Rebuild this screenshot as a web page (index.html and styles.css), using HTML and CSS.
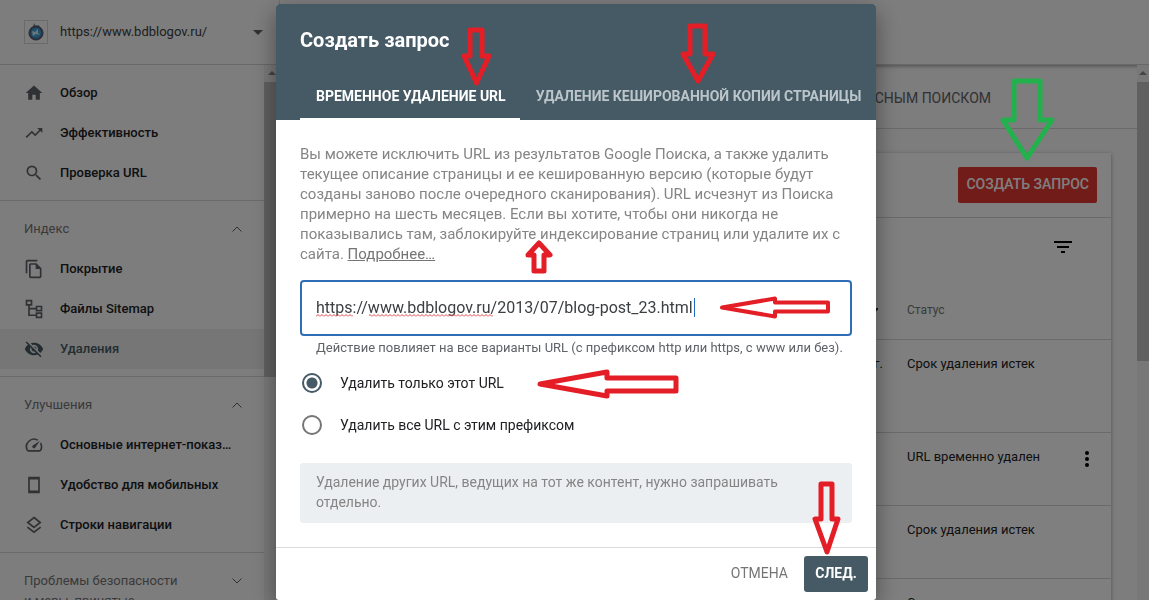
FILE: index.html
```html
<!DOCTYPE html>
<html lang="ru">
<head>
    <meta charset="UTF-8">
    <meta name="viewport" content="width=device-width, initial-scale=1.0">
    <title>Удаления</title>
    <link rel="stylesheet" href="styles.css">
</head>
<body>
    <div class="page">
        <!-- Top bar -->
        <header class="topbar">
            <button class="site-select">
                <span class="favicon">
                    <svg width="16" height="18" viewBox="0 0 16 18">
                        <path d="M5 4 6 0l2 3 3-1 1 4z" fill="#8a8f98"/>
                        <circle cx="8" cy="10" r="7" fill="#4f6b92" stroke="#4a4f5c"/>
                        <circle cx="8" cy="10" r="5" fill="#3fa3d8"/>
                        <path d="m4 8 3 1 3-3v4l2 2-4-1-3 2z" fill="#d5edf5"/>
                    </svg>
                </span>
                <span class="site-url">https://www.bdblogov.ru/</span>
                <svg width="10" height="5" viewBox="0 0 10 5"><path d="M0 0h10L5 5z" fill="#5f6368"/></svg>
            </button>
        </header>

        <div class="columns">
            <!-- Sidebar -->
            <nav class="sidebar">
                <div class="nav-list">
                    <div class="nav-section">
                        <a class="nav-item" href="#">
                            <svg class="icon" viewBox="0 0 24 24"><path d="M10 20v-6h4v6h5v-8h3L12 3 2 12h3v8z"/></svg>
                            <span>Обзор</span>
                        </a>
                        <a class="nav-item" href="#">
                            <svg class="icon" viewBox="0 0 24 24"><path d="m16 6 2.29 2.29-4.88 4.88-4-4L2 16.59 3.41 18l6-6 4 4 6.3-6.29L22 12V6z"/></svg>
                            <span>Эффективность</span>
                        </a>
                        <a class="nav-item" href="#">
                            <svg class="icon" viewBox="0 0 24 24"><path d="M15.5 14h-.79l-.28-.27A6.47 6.47 0 0 0 16 9.5 6.5 6.5 0 1 0 9.5 16c1.61 0 3.09-.59 4.23-1.57l.27.28v.79l5 4.99L20.49 19l-4.99-5zm-6 0C7.01 14 5 11.99 5 9.5S7.01 5 9.5 5 14 7.01 14 9.5 11.99 14 9.5 14z"/></svg>
                            <span>Проверка URL</span>
                        </a>
                    </div>
                    <div class="nav-section">
                        <button class="nav-title">
                            <span>Индекс</span>
                            <svg class="chevron" viewBox="0 0 10 6"><path d="m0.500 5.500 4.500-4.500 4.500 4.500"/></svg>
                        </button>
                        <a class="nav-item" href="#">
                            <svg class="icon" viewBox="0 0 24 24"><path d="M16 1H4a2 2 0 0 0-2 2v14h2V3h12zm-1 4H8a2 2 0 0 0-2 2v14a2 2 0 0 0 2 2h11a2 2 0 0 0 2-2V11zM8 21V7h6v5h5v9z"/></svg>
                            <span>Покрытие</span>
                        </a>
                        <a class="nav-item" href="#">
                            <svg class="icon line" viewBox="0 0 24 24"><path d="M3 2h6v5H3zM15 9h6v5h-6zM15 17h6v5h-6zM6 7v12.500h9M6 11.500h9"/></svg>
                            <span>Файлы Sitemap</span>
                        </a>
                        <a class="nav-item active" href="#">
                            <svg class="icon" viewBox="0 0 24 24"><path d="M12 7a5 5 0 0 1 4.640 6.830l2.920 2.920A11.820 11.820 0 0 0 23 12c-1.730-4.390-6-7.500-11-7.500-1.400 0-2.740.250-3.980.700l2.160 2.160C10.740 7.130 11.350 7 12 7zM2 4.270l2.740 2.740A11.800 11.800 0 0 0 1 12c1.730 4.390 6 7.500 11 7.500 1.550 0 3.030-.300 4.380-.840L19.730 22 21 20.730 3.270 3zM7.530 9.800l1.550 1.550A3 3 0 0 0 12.650 14.920l1.550 1.550A5 5 0 0 1 7.530 9.800zm4.310-.780 3.150 3.150.020-.160a3 3 0 0 0-3-3z"/></svg>
                            <span>Удаления</span>
                        </a>
                    </div>
                    <div class="nav-section">
                        <button class="nav-title">
                            <span>Улучшения</span>
                            <svg class="chevron" viewBox="0 0 10 6"><path d="m0.500 5.500 4.500-4.500 4.500 4.500"/></svg>
                        </button>
                        <a class="nav-item" href="#">
                            <svg class="icon" viewBox="0 0 24 24"><path d="m20.380 8.570-1.230 1.850a8 8 0 0 1-.220 7.580H5.070A8 8 0 0 1 15.580 6.850l1.850-1.230A10 10 0 0 0 3.350 19a2 2 0 0 0 1.720 1h13.850a2 2 0 0 0 1.740-1 10 10 0 0 0-.270-10.440zM10.590 15.410a2 2 0 0 0 2.830 0l5.660-8.490-8.490 5.660a2 2 0 0 0 0 2.830z"/></svg>
                            <span>Основные интернет-показ…</span>
                        </a>
                        <a class="nav-item" href="#">
                            <svg class="icon line" viewBox="0 0 24 24"><path d="M6 3h12v18H6zM6 4.500h12M6 19.500h12"/></svg>
                            <span>Удобство для мобильных</span>
                        </a>
                        <a class="nav-item" href="#">
                            <svg class="icon line" viewBox="0 0 24 24"><path d="m12 3 7.500 6-7.500 6-7.500-6zM4 14.500l8 6.200 8-6.200"/></svg>
                            <span>Строки навигации</span>
                        </a>
                    </div>
                    <div class="nav-section">
                        <button class="nav-title">
                            <span>Проблемы безопасности и меры, принятые</span>
                            <svg class="chevron" viewBox="0 0 10 6"><path d="m0.500 0.500 4.500 4.500 4.500-4.500"/></svg>
                        </button>
                    </div>
                </div>
                <div class="scrollbar">
                    <svg class="scroll-up" viewBox="0 0 8 4"><path d="M0 4h8L4 0z"/></svg>
                    <div class="thumb nav-thumb"></div>
                </div>
            </nav>

            <!-- Requests -->
            <main class="main">
                <div class="content">
                    <h2 class="content-tab">СНЫМ ПОИСКОМ</h2>
                    <section class="card">
                        <div class="card-head">
                            <button class="create-button">СОЗДАТЬ ЗАПРОС</button>
                        </div>
                        <div class="card-tools">
                            <button class="filter-button" aria-label="Фильтр">
                                <svg width="18" height="12" viewBox="0 0 18 12"><path d="M0 0h18v2H0zM3 5h12v2H3zM7 10h4v2H7z"/></svg>
                            </button>
                        </div>
                        <table class="requests">
                            <thead>
                                <tr>
                                    <th class="date"><svg width="8" height="6" viewBox="0 0 8 6"><path d="m0 1 3 4 5-5" fill="none" stroke="#202124" stroke-width="2"/></svg></th>
                                    <th class="status">Статус</th>
                                    <th class="menu"></th>
                                </tr>
                            </thead>
                            <tbody>
                                <tr class="tall">
                                    <td class="date">г.</td>
                                    <td>Срок удаления истек</td>
                                    <td></td>
                                </tr>
                                <tr>
                                    <td></td>
                                    <td>URL временно удален</td>
                                    <td class="menu">
                                        <button class="more-button" aria-label="Ещё">
                                            <svg width="4" height="16" viewBox="0 0 4 16"><circle cx="2" cy="2" r="2"/><circle cx="2" cy="8" r="2"/><circle cx="2" cy="14" r="2"/></svg>
                                        </button>
                                    </td>
                                </tr>
                                <tr>
                                    <td></td>
                                    <td>Срок удаления истек</td>
                                    <td></td>
                                </tr>
                                <tr>
                                    <td></td>
                                    <td>Срок удаления истек</td>
                                    <td></td>
                                </tr>
                            </tbody>
                        </table>
                    </section>
                </div>
                <div class="scrollbar">
                    <svg class="scroll-up" viewBox="0 0 8 4"><path d="M0 4h8L4 0z"/></svg>
                    <div class="thumb main-thumb"></div>
                </div>
            </main>
        </div>
    </div>

    <!-- Dialog -->
    <div class="overlay">
        <form class="dialog">
            <div class="dialog-header">
                <h1 class="dialog-title">Создать запрос</h1>
                <div class="tabs">
                    <button type="button" class="tab selected">ВРЕМЕННОЕ УДАЛЕНИЕ URL</button>
                    <button type="button" class="tab">УДАЛЕНИЕ КЕШИРОВАННОЙ КОПИИ СТРАНИЦЫ</button>
                </div>
            </div>
            <div class="dialog-body">
                <p class="description">Вы можете исключить URL из результатов Google Поиска, а также удалить<br>
                    текущее описание страницы и ее кешированную версию (которые будут<br>
                    созданы заново после очередного сканирования). URL исчезнут из Поиска<br>
                    примерно на шесть месяцев. Если вы хотите, чтобы они никогда не<br>
                    показывались там, заблокируйте индексирование страниц или удалите их с<br>
                    сайта. <a href="#">Подробнее…</a></p>
                <div class="field">
                    <input type="text" id="url" class="url-input" aria-label="URL" aria-describedby="url-hint" spellcheck="false" value="https://www.bdblogov.ru/2013/07/blog-post_23.html">
                    <!-- spelling marks and text caret -->
                    <svg class="field-marks" viewBox="0 0 400 24" aria-hidden="true">
                        <defs>
                            <pattern id="wave" width="4" height="3" patternUnits="userSpaceOnUse">
                                <path d="m0 2.500 2-2 2 2" fill="none" stroke="#e04545"/>
                            </pattern>
                        </defs>
                        <rect x="0" y="18" width="37" height="3" fill="url(#wave)"/>
                        <rect x="53" y="18" width="124" height="3" fill="url(#wave)"/>
                        <path d="M378.500 2v19" stroke="#1f6cc0"/>
                    </svg>
                </div>
                <div class="hint" id="url-hint">Действие повлияет на все варианты URL (с префиксом http или https, с www или без).</div>
                <label class="option"><input type="radio" name="scope" checked> Удалить только этот URL</label>
                <label class="option"><input type="radio" name="scope"> Удалить все URL с этим префиксом</label>
                <div class="notice">Удаление других URL, ведущих на тот же контент, нужно запрашивать отдельно.</div>
            </div>
            <div class="dialog-footer">
                <button type="button" class="cancel-button">ОТМЕНА</button>
                <button type="button" class="next-button">СЛЕД.</button>
            </div>
            <!-- Red pointers -->
            <svg class="pointers" aria-hidden="true">
                <path d="M194 26h12v26h7l-12.500 27L188 52h6z"/>
                <path d="M414 22h15v28h8l-15 27-15-27h7z"/>
                <path d="m263 239 11 12h-6v16h-10v-16h-6z"/>
                <path class="thin" d="m446 303.500 53-9v4h53v9h-53v5z"/>
                <path d="m264 380 67-12v6h69v13h-69v5z"/>
                <path d="M545 480h11v35h6l-11 33-12-33h6z"/>
            </svg>
        </form>
    </div>
    <svg class="green-pointer" viewBox="0 0 56 86" aria-hidden="true">
        <path d="M14 5h26v39h12L27 82 3 44h11z"/>
    </svg>
</body>
</html>
```
FILE: styles.css
```css
* {
    margin: 0;
    padding: 0;
    box-sizing: border-box;
}

body {
    font-family: Roboto, "Liberation Sans", sans-serif;
    font-size: 14px;
    line-height: 20px;
    color: #202124;
    background-color: #fafafa;
    height: 100vh;
    overflow: hidden;
}

button {
    font: inherit;
    color: inherit;
    background: none;
    border: none;
    cursor: pointer;
}

.page {
    height: 100vh;
    display: flex;
    flex-direction: column;
    overflow: hidden;
}

/* Top bar */
.topbar {
    height: 65px;
    flex: none;
    display: flex;
    background-color: #fafafa;
    border-bottom: 1px solid #d0d0d0;
    box-shadow: 0 1px 4px rgba(0, 0, 0, 0.4);
}

.site-select {
    width: 280px;
    padding: 0 16px 0 24px;
    display: flex;
    align-items: center;
    border-right: 1px solid #dadce0;
    text-align: left;
    font-size: 13px;
}

.favicon {
    width: 24px;
    height: 24px;
    margin-right: 12px;
    display: flex;
    align-items: center;
    justify-content: center;
    border: 1px solid #d5d5d5;
}

.site-url {
    flex: 1;
    color: #3c4043;
}

.columns {
    flex: 1;
    min-height: 0;
    display: flex;
    overflow: hidden;
}

/* Sidebar */
.sidebar {
    width: 280px;
    flex: none;
    display: flex;
    overflow: hidden;
    background-color: #fafafa;
    z-index: 1;
}

.nav-list {
    flex: 1;
}

.nav-section {
    padding: 8px 0 7px;
    border-bottom: 1px solid #d5d5d5;
}

.nav-item {
    height: 40px;
    padding-left: 24px;
    display: flex;
    align-items: center;
    gap: 16px;
    color: #202124;
    font-size: 13px;
    font-weight: 500;
    text-decoration: none;
    white-space: nowrap;
}

.nav-item.active {
    background-color: #ececec;
    color: #455a64;
}

.icon {
    width: 20px;
    height: 20px;
    fill: #5f6368;
}

.icon.line {
    fill: none;
    stroke: #5f6368;
    stroke-width: 2;
}

.active .icon {
    fill: #455a64;
}

.nav-title {
    width: 100%;
    padding: 10px 22px 10px 24px;
    display: flex;
    align-items: flex-start;
    justify-content: space-between;
    color: #757575;
    font-size: 13px;
    text-align: left;
}

.nav-title span {
    width: 160px;
}

.chevron {
    width: 10px;
    height: 6px;
    margin-top: 7px;
    fill: none;
    stroke: #5f6368;
}

/* Scrollbars */
.scrollbar {
    width: 16px;
    flex: none;
    background-color: #f1f1f1;
    display: flex;
    flex-direction: column;
    align-items: center;
}

.scroll-up {
    width: 8px;
    height: 4px;
    margin: 6px 0 7px;
    flex: none;
    fill: #8a8a8a;
}

.thumb {
    width: 100%;
    background-color: #c1c1c1;
}

.nav-thumb {
    height: 295px;
}

.main-thumb {
    height: 279px;
}

/* Requests */
.main {
    flex: 1;
    min-width: 0;
    display: flex;
}

.main .scrollbar {
    width: 12px;
}

.content {
    flex: 1;
}

.content-tab {
    height: 64px;
    padding: 0 146px 0 0;
    border-bottom: 1px solid #d5d5d5;
    font-size: 14px;
    font-weight: 400;
    line-height: 66px;
    text-align: right;
    color: #5f6368;
}

.card {
    margin: 24px 26px 0 24px;
    background-color: #fff;
    box-shadow: 0 1px 4px rgba(0, 0, 0, 0.35);
}

.card-head {
    height: 65px;
    padding: 14px;
    display: flex;
    justify-content: flex-end;
    border-bottom: 1px solid #d5d5d5;
}

.create-button {
    height: 36px;
    padding: 0 8px 2px;
    border-radius: 2px;
    background-color: #e53935;
    color: #fff;
    font-weight: 500;
}

.card-tools {
    height: 64px;
    padding: 20px 39px 0 0;
    text-align: right;
}

.requests {
    width: 100%;
    border-collapse: collapse;
    font-size: 13px;
    text-align: left;
}

.requests th {
    height: 57px;
    border-bottom: 1px solid #d5d5d5;
    font-size: 12px;
    font-weight: 400;
    color: #757575;
}

.requests td {
    height: 73px;
    padding-top: 14px;
    vertical-align: top;
    border-bottom: 1px solid #d5d5d5;
}

.requests .tall td {
    height: 93px;
}

.requests .date {
    padding-right: 24px;
    text-align: right;
}

.requests th.date {
    padding-right: 29px;
}

.requests .status {
    width: 156px;
}

.requests .menu {
    width: 48px;
    text-align: center;
}

.more-button svg {
    display: block;
    margin-top: 4px;
}

/* Dialog */
.overlay {
    position: fixed;
    inset: 0;
    z-index: 2;
    padding: 4px 0 0 3px;
    display: flex;
    justify-content: center;
    align-items: flex-start;
    background-color: rgba(0, 0, 0, 0.5);
}

.dialog {
    position: relative;
    width: 600px;
    background-color: #fff;
    border-radius: 3px;
    overflow: hidden;
    box-shadow: 0 8px 24px rgba(0, 0, 0, 0.4);
}

.dialog-header {
    padding: 24px 24px 0;
    background-color: #455a64;
    color: #fff;
}

.dialog-title {
    margin-bottom: 20px;
    font-size: 20px;
    font-weight: 700;
    line-height: 24px;
}

.tabs {
    display: flex;
}

.tab {
    height: 48px;
    padding: 1px 14px 0 16px;
    border-bottom: 2px solid transparent;
    font-weight: 700;
    color: #bcc6ca;
    white-space: nowrap;
}

.tab.selected {
    border-bottom-color: #fff;
    color: #fff;
}

.dialog-body {
    padding: 24px;
}

.description {
    margin-bottom: 16px;
    font-size: 15px;
    color: #858585;
    white-space: nowrap;
}

.description a {
    color: #757575;
}

.field {
    position: relative;
}

.url-input {
    display: block;
    width: 100%;
    height: 56px;
    padding: 0 14px 2px;
    border: 2px solid #2f6db5;
    border-radius: 4px;
    outline: none;
    font: 16px Roboto, "Liberation Sans", sans-serif;
    color: #3c4043;
}

.field-marks {
    position: absolute;
    left: 16px;
    top: 16px;
    width: 400px;
    height: 24px;
    pointer-events: none;
}

.hint {
    margin: 2px 0 4px 16px;
    font-size: 13px;
    color: #5f6368;
    white-space: nowrap;
}

.option {
    height: 42px;
    display: flex;
    align-items: center;
    gap: 18px;
}

.option input {
    appearance: none;
    width: 20px;
    height: 20px;
    margin-left: 2px;
    border: 2px solid #757575;
    border-radius: 50%;
}

.option input:checked {
    border-color: #455a64;
    background: radial-gradient(circle, #455a64 5px, transparent 6px);
}

.notice {
    margin-top: 17px;
    padding: 9px 16px 11px;
    border-radius: 3px;
    background-color: #eceff1;
    color: #858585;
}

.dialog-footer {
    padding: 8px;
    display: flex;
    justify-content: flex-end;
    gap: 8px;
    border-top: 1px solid #dadce0;
}

.cancel-button,
.next-button {
    height: 36px;
    padding: 0 8px 2px;
    color: #757575;
}

.next-button {
    min-width: 64px;
    border-radius: 3px;
    background-color: #455a64;
    color: #fff;
    font-weight: 700;
}

/* Pointers drawn over the page */
.pointers {
    position: absolute;
    left: 0;
    top: 0;
    width: 100%;
    height: 100%;
    fill: none;
    stroke: #e31e26;
    stroke-width: 5;
    stroke-linejoin: round;
    pointer-events: none;
}

.pointers .thin {
    stroke-width: 4;
}

.green-pointer {
    position: fixed;
    z-index: 3;
    top: 76px;
    right: 93px;
    width: 56px;
    height: 86px;
    fill: none;
    stroke: #22b14c;
    stroke-width: 5;
    stroke-linejoin: round;
    pointer-events: none;
}
```
